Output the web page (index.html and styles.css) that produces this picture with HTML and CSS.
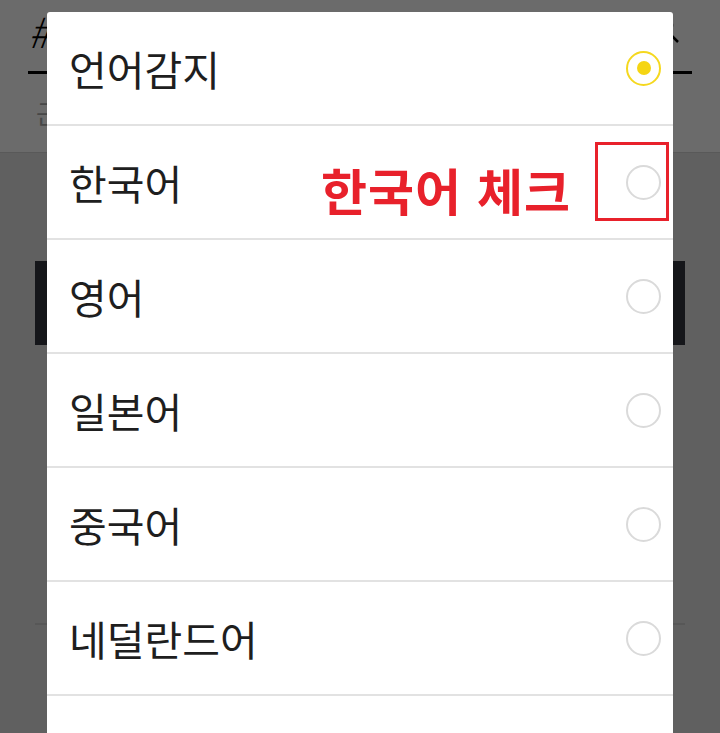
FILE: index.html
```html
<!DOCTYPE html>
<html lang="ko">
<head>
    <meta charset="UTF-8">
    <meta name="viewport" content="width=device-width, initial-scale=1.0">
    <title>언어 선택</title>
    <link rel="stylesheet" href="styles.css">
</head>
<body>
    <!-- Page behind the dialog -->
    <div class="page">
        <div class="header">
            <div class="search">
                <span class="search-text">#</span>
                <svg class="search-icon" width="36" height="36" viewBox="0 0 36 36">
                    <circle cx="14" cy="14" r="11" fill="none" stroke="#000" stroke-width="2.5"/>
                    <line x1="22" y1="22" x2="31" y2="31" stroke="#000" stroke-width="2.5"/>
                </svg>
            </div>
            <div class="tabs">근처</div>
        </div>
        <div class="content">
            <div class="banner"></div>
            <div class="divider"></div>
        </div>
    </div>

    <div class="overlay"></div>

    <!-- Language dialog -->
    <div class="dialog">
        <ul class="options">
            <li class="option">언어감지 <span class="radio checked"></span></li>
            <li class="option">한국어 <span class="radio"></span></li>
            <li class="option">영어 <span class="radio"></span></li>
            <li class="option">일본어 <span class="radio"></span></li>
            <li class="option">중국어 <span class="radio"></span></li>
            <li class="option">네덜란드어 <span class="radio"></span></li>
            <li class="option empty"><span class="radio"></span></li>
        </ul>

        <!-- Annotation -->
        <div class="note">한국어 체크</div>
        <div class="note-box"></div>
    </div>
</body>
</html>
```

FILE: styles.css
```css
html, body {
    margin: 0;
    height: 100%;
    overflow: hidden;
}

body {
    font-family: "Noto Sans CJK KR", "Noto Sans", sans-serif;
    background: #e4e4e4;
}

.page {
    width: 720px;
}

.header {
    background: #fff;
    height: 153px;
    border-bottom: 1px solid #d4d4d4;
    padding: 0 28px;
    box-sizing: border-box;
}

.search {
    display: flex;
    justify-content: space-between;
    align-items: center;
    height: 74px;
    border-bottom: 3px solid #000;
    box-sizing: border-box;
}

.search-text {
    font-size: 42px;
    line-height: 1;
    margin-top: -12px;
    font-style: italic;
    font-weight: 300;
}

.search-icon {
    margin-top: -14px;
    margin-right: 9px;
}

.tabs {
    font-size: 26px;
    color: #aaa;
    padding: 20px 0 0 8px;
}

.content {
    padding: 108px 35px 0;
}

.banner {
    height: 84px;
    background: #33363f;
}

.divider {
    margin-top: 278px;
    height: 2px;
    background: #d0d0d0;
}

.overlay {
    position: fixed;
    inset: 0;
    background: rgba(0, 0, 0, 0.58);
}

.dialog {
    position: fixed;
    left: 47px;
    top: 12px;
    width: 626px;
    background: #fff;
    border-radius: 3px 3px 0 0;
}

.options {
    list-style: none;
    margin: 0;
    padding: 0;
}

.option {
    display: flex;
    justify-content: space-between;
    align-items: center;
    height: 112px;
    padding: 0 12px 0 22px;
    border-bottom: 2px solid #e2e2e2;
    font-size: 41px;
    color: #1e1e1e;
}

.option.empty {
    justify-content: flex-end;
}

.radio {
    width: 35px;
    height: 35px;
    box-sizing: border-box;
    border: 2.5px solid #dadada;
    border-radius: 50%;
    display: flex;
    justify-content: center;
    align-items: center;
}

.radio.checked {
    border-color: #f5d81f;
}

.radio.checked::after {
    content: "";
    width: 14px;
    height: 14px;
    border-radius: 50%;
    background: #f5d513;
}

.note {
    position: absolute;
    left: 274px;
    top: 141px;
    font-size: 50px;
    font-weight: bold;
    color: #e8212b;
    letter-spacing: 1px;
}

.note-box {
    position: absolute;
    left: 548px;
    top: 130px;
    width: 74px;
    height: 79px;
    box-sizing: border-box;
    border: 3px solid #e8212b;
}
```
